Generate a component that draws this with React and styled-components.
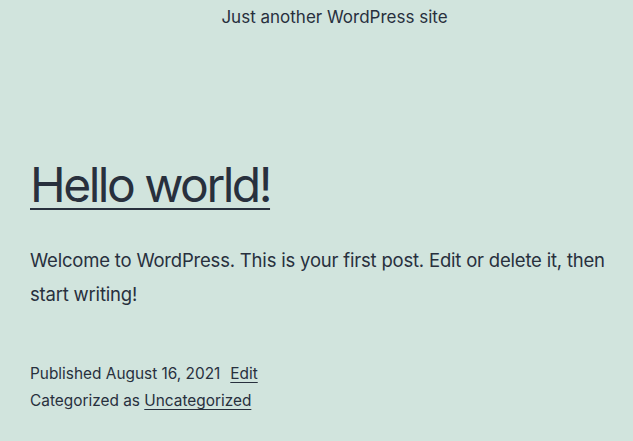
import React from "react";
import styled, { createGlobalStyle } from "styled-components";

const Global = createGlobalStyle`
  html, body { margin: 0; padding: 0; background: #d1e4dd; }
  body {
    color: #28303d;
    font-family: Inter, "Noto Sans", sans-serif;
    -webkit-font-smoothing: antialiased;
  }
`;

const Page = styled.div`
  width: 633px;
  height: 441px;
  overflow: hidden;
  display: flex;
  flex-direction: column;
  padding: 0 20px 0 30px;
  box-sizing: border-box;
`;

const Description = styled.p`
  margin: 5px 0 0;
  padding-left: 26px;
  font-size: 17px;
  line-height: 25px;
  text-align: center;
`;

const Title = styled.h1`
  margin: 124px 0 0;
  font-size: 48px;
  font-weight: 400;
  line-height: 62px;
  letter-spacing: -2.5px;
  a {
    color: inherit;
    text-decoration: underline;
    text-decoration-thickness: 2px;
    text-underline-offset: 6px;
  }
`;

const Body = styled.p`
  margin: 27px 0 0;
  font-size: 18.5px;
  line-height: 34px;
  letter-spacing: -0.2px;
`;

const Meta = styled.div`
  margin-top: 49px;
  font-size: 15.4px;
  line-height: 27px;
`;

const MetaLine = styled.div`
  display: flex;
  gap: 10px;
`;

const MetaLink = styled.a`
  color: inherit;
  text-decoration: underline;
  text-decoration-thickness: 1px;
  text-underline-offset: 3px;
`;

export default function App() {
  return (
    <>
      <Global />
      <Page>
        <Description>Just another WordPress site</Description>
        <Title>
          <a href="#">Hello world!</a>
        </Title>
        <Body>
          Welcome to WordPress. This is your first post. Edit or delete it, then start writing!
        </Body>
        <Meta>
          <MetaLine>
            <span>Published August 16, 2021</span>
            <MetaLink href="#">Edit</MetaLink>
          </MetaLine>
          <div>
            Categorized as <MetaLink href="#">Uncategorized</MetaLink>
          </div>
        </Meta>
      </Page>
    </>
  );
}
